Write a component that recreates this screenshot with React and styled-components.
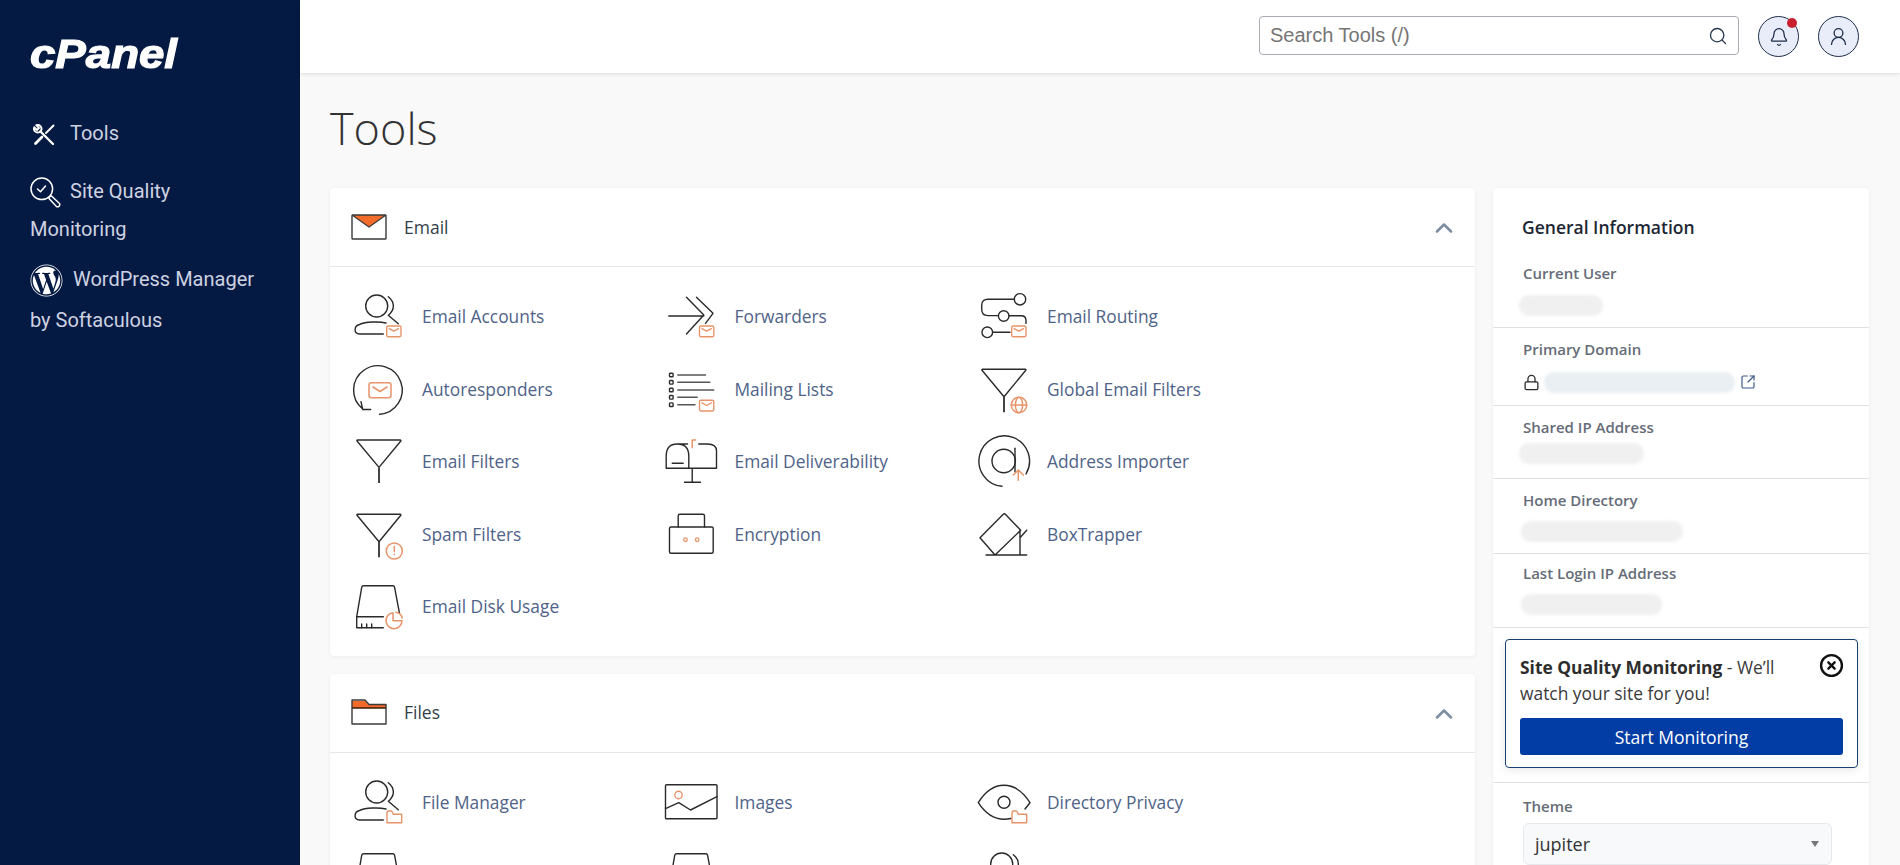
import React from "react";
import styled, { createGlobalStyle } from "styled-components";
import { Bell, ChevronUp, CircleX, Lock, Search, SquareArrowOutUpRight, UserRound } from "lucide-react";
import { FaWordpress } from "react-icons/fa";

const INK = "#2a2a2a";
const ORANGE = "#e8946a";

const GlobalStyle = createGlobalStyle`
  html, body {
    margin: 0;
    height: 100%;
    overflow: hidden;
    background: #f9f9f9;
    font-family: "Open Sans", "Liberation Sans", sans-serif;
  }
  * { box-sizing: border-box; }
`;

const Shell = styled.div`
  display: flex;
  height: 865px;
  overflow: hidden;
`;

const Sidebar = styled.nav`
  flex: 0 0 300px;
  background: #051a42;
  padding: 31px 30px 0;
  font-family: Roboto, "Liberation Sans", sans-serif;
`;

const Logo = styled.div`
  font-family: "Liberation Sans", sans-serif;
  font-size: 40px;
  line-height: 46px;
  font-weight: 700;
  font-style: italic;
  color: #fff;
  -webkit-text-stroke: 1.2px #fff;
  transform: scaleX(1.14);
  transform-origin: left center;
  margin-bottom: 40px;
`;

const NavItem = styled.a`
  display: block;
  color: #cdd2e2;
  font-size: 20px;
  line-height: ${(p) => p.$line}px;
  margin-bottom: ${(p) => p.$after}px;
  svg {
    vertical-align: middle;
    margin-right: ${(p) => p.$iconGap}px;
    margin-left: ${(p) => p.$iconLeft || 0}px;
    color: #fff;
  }
`;

const Main = styled.div`
  flex: 1;
  min-width: 0;
  display: flex;
  flex-direction: column;
`;

const Topbar = styled.header`
  height: 73px;
  flex: none;
  background: #fff;
  box-shadow: 0 1px 4px rgba(0, 0, 0, 0.12);
  display: flex;
  align-items: flex-start;
  padding: 16px 41px 0 0;
  justify-content: flex-end;
  gap: 19px;
`;

const SearchBox = styled.div`
  width: 480px;
  height: 39px;
  border: 1px solid #a9adb3;
  border-radius: 4px;
  display: flex;
  align-items: center;
  justify-content: space-between;
  padding: 0 10px 0 10px;
  font-family: "Liberation Sans", sans-serif;
  font-size: 20px;
  color: #757575;
  svg { color: #26374f; }
`;

const RoundButton = styled.button`
  position: relative;
  width: 41px;
  height: 41px;
  padding: 0;
  border: 1px solid #1d2c4a;
  border-radius: 50%;
  background: #e8edf9;
  display: flex;
  align-items: center;
  justify-content: center;
  color: #1d2c4a;
`;

const Dot = styled.span`
  position: absolute;
  top: 1px;
  right: 1px;
  width: 10px;
  height: 10px;
  border-radius: 50%;
  background: #c8202f;
`;

const Content = styled.main`
  flex: 1;
  padding: 0 31px 0 30px;
`;

const Title = styled.h1`
  margin: 0;
  height: 115px;
  padding-top: 23px;
  font-size: 45px;
  line-height: 64px;
  font-weight: 300;
  color: #333;
`;

const Columns = styled.div`
  display: grid;
  grid-template-columns: 1145px 376px;
  gap: 18px;
  align-items: start;
`;

const Panel = styled.section`
  background: #fff;
  border-radius: 4px;
  box-shadow: 0 1px 4px rgba(0, 0, 0, 0.06);
  margin-bottom: 18px;
`;

const PanelHeader = styled.div`
  height: 79px;
  border-bottom: 1px solid #e4e6e8;
  padding: 0 17px 1px 21px;
  display: flex;
  align-items: center;
  gap: 17px;
  font-size: 17.5px;
  color: #333f48;
  svg:last-child { margin: 3px 0 0 auto; color: #7f8da3; }
`;

const ToolGrid = styled.div`
  display: grid;
  grid-template-columns: repeat(3, 312.5px);
  grid-auto-rows: 72.5px;
  padding: 13px 0 13px 20px;
`;

const Tool = styled.a`
  display: flex;
  align-items: center;
  gap: 16px;
  font-size: 17.35px;
  color: #4f6388;
`;

const ToolIcon = styled.svg.attrs({ viewBox: "0 0 56 56", fill: "none" })`
  flex: none;
  width: 56px;
  height: 56px;
  stroke: ${INK};
  stroke-width: 1.4;
  stroke-linecap: round;
  stroke-linejoin: round;
`;

const InfoPanel = styled(Panel)`
  margin: 0;
  height: 700px;
`;

const InfoTitle = styled.h2`
  margin: 0;
  padding: 27px 0 0 29px;
  font-size: 17.5px;
  line-height: 24px;
  font-weight: 600;
  color: #1d2733;
`;

const InfoRow = styled.div`
  padding: ${(p) => p.$top}px 0 ${(p) => p.$bottom}px 30px;
  border-bottom: 1px solid #dfe1e4;
`;

const InfoLabel = styled.div`
  font-size: 15px;
  line-height: 22px;
  font-weight: 600;
  color: #666c78;
`;

const Blur = styled.div`
  width: ${(p) => p.$w}px;
  height: 21px;
  margin-top: ${(p) => p.$gap}px;
  margin-left: ${(p) => p.$left}px;
  border-radius: 10px;
  background: ${(p) => p.$color || "#f0f0f0"};
  filter: blur(1.5px);
`;

const DomainLine = styled.div`
  display: flex;
  align-items: center;
  margin-top: 12px;
  height: 20px;
  svg:first-child { color: #2a2a2a; margin-right: 4px; }
  svg:last-child { color: #3d5a8c; margin-left: 5px; }
  ${Blur} { margin: 0; }
`;

const PromoWrap = styled.div`
  padding: 11px 11px 14px 12px;
  border-bottom: 1px solid #dfe1e4;
`;

const Promo = styled.div`
  position: relative;
  height: 129px;
  border: 1px solid #17406f;
  border-radius: 4px;
  padding: 15px 14px 0;
  box-shadow: 0 2px 8px rgba(0, 0, 0, 0.1);
  font-size: 17.4px;
  line-height: 25.5px;
  color: #3a3a3a;
  b { font-weight: 700; color: #2d2d2d; }
`;

const PromoText = styled.p`
  margin: 0 0 12px;
  width: 270px;
`;

const CloseButton = styled.span`
  position: absolute;
  top: 13px;
  right: 13px;
  display: flex;
  color: #111;
`;

const StartButton = styled.button`
  display: block;
  width: 100%;
  height: 37px;
  border: 0;
  border-radius: 3px;
  background: #023ca5;
  color: #fff;
  font-family: inherit;
  font-size: 17.5px;
  font-weight: 500;
`;

const ThemeBlock = styled.div`
  padding: 12px 0 0 30px;
`;

const ThemeSelect = styled.div`
  width: 309px;
  height: 42px;
  margin-top: 6px;
  padding: 0 11px;
  border: 1px solid #e6e8ec;
  border-radius: 6px;
  background: #f8f9fb;
  display: flex;
  align-items: center;
  justify-content: space-between;
  font-size: 18px;
  color: #333;
`;

const Caret = styled.span`
  width: 0;
  height: 0;
  margin-right: 1px;
  border-left: 4.5px solid transparent;
  border-right: 4.5px solid transparent;
  border-top: 6px solid #777;
`;

function MiniMail({ x = 36.7, y = 38 }) {
  return (
    <g stroke={ORANGE} transform={`translate(${x} ${y})`}>
      <rect width="14.3" height="10.7" rx="1.4" />
      <path d="M2.5 2.6 7.1 5.2 11.8 2.6" />
    </g>
  );
}

function MiniFolder({ x = 37, y = 37 }) {
  return (
    <path
      stroke={ORANGE}
      transform={`translate(${x} ${y})`}
      d="M0 1.5V11.7H14.7V3.2H6.4L4.6 0H1Z"
    />
  );
}

function Person({ children }) {
  return (
    <ToolIcon>
      <circle cx="26.7" cy="18" r="11" />
      <path d="M38.3 8.7c6.5 5 7 13 0 18.5l10 8.5M33.3 46H9.5c-6-.4-5.8-8 0-9.5 6-2.6 19-3.4 26.5-1.5" />
      {children}
    </ToolIcon>
  );
}

function DiskBody({ children }) {
  return (
    <ToolIcon>
      <path d="M33.3 49.7H6.7V38.7L11.7 9.4q.3-1.7 2-1.7H42.8q1.5 0 1.8 1.7L49.5 35.3M6.7 38.7H33.3" />
      <path d="M11.7 46v3.7M16.7 46v3.7M21.7 46v3.7" />
      {children}
    </ToolIcon>
  );
}

function Funnel({ top = 8.3, children }) {
  const apex = top + 27.4;
  return (
    <ToolIcon>
      <path d={`M7.5 ${top}H50.2q1 0 .6 1L29 ${apex}L7 ${top + 1}q-.4-1 .5-1Z`} />
      <path strokeWidth="2" strokeLinecap="butt" stroke="#444" d={`M29 ${apex}V${top + 43}`} />
      {children}
    </ToolIcon>
  );
}

const icons = {
  accounts: (
    <Person>
      <MiniMail />
    </Person>
  ),
  forwarders: (
    <ToolIcon>
      <path d="M5.8 28H40.8M23.5 9.3 40.8 27 23.5 46M33.5 9.3 50 25.3 42.5 35.3" />
      <MiniMail x={36.5} />
    </ToolIcon>
  ),
  routing: (
    <ToolIcon>
      <circle cx="45" cy="11.3" r="5.7" />
      <circle cx="28.7" cy="28" r="5.3" />
      <circle cx="12.3" cy="44.3" r="5.3" />
      <path d="M39.3 11.3H13q-6.3 0-6.3 6v4q0 6.3 6.3 6.3H23.3M34 27.7H46q5 0 5 4.5v3.2M17.7 44.3H35" />
      <MiniMail />
    </ToolIcon>
  ),
  autoresponders: (
    <ToolIcon>
      <g transform="translate(1 0)">
        <path d="M28.5 53.3A24.3 24.3 0 1 0 11.7 48M10 40.7 11.7 48.5 19.7 48.5" />
        <g stroke={ORANGE} strokeWidth="1.5">
          <rect x="18" y="21.7" width="22" height="15" rx="2.5" />
          <path d="M22 26 29 30.5 36 26" />
        </g>
      </g>
    </ToolIcon>
  ),
  lists: (
    <ToolIcon>
      {[14, 21.3, 29, 36.3, 43.7].map((y) => (
        <rect key={y} x="6.5" y={y - 1.8} width="3.6" height="3.6" rx=".8" />
      ))}
      <path stroke="#555" strokeWidth="1.5" d="M14.8 14H42.5M14.8 21.3H46.8M14.8 29H50.8M14.8 36.3H34.2M14.8 43.7H32" />
      <MiniMail x={36.5} y={39.3} />
    </ToolIcon>
  ),
  globalFilters: (
    <Funnel>
      <g stroke={ORANGE} strokeWidth="1.5">
        <circle cx="44" cy="44" r="7.7" />
        <ellipse cx="44" cy="44" rx="3.6" ry="7.7" />
        <path d="M36.3 44H51.7" />
      </g>
    </Funnel>
  ),
  filters: <Funnel top={7} />,
  deliverability: (
    <ToolIcon>
      <path d="M25.8 35.3H3.2V23Q3.2 11 14.2 11 25.8 11 25.8 23V35.3H53.5V18Q53.5 11 44.5 11H35.8M14.2 11H24.5M9.2 30.3H20.2M29.2 35.3V49.3M21.5 49.3H37.5" />
      <path stroke={ORANGE} strokeWidth="1.5" strokeLinecap="butt" d="M29.2 15.3V7H33.2" />
    </ToolIcon>
  ),
  importer: (
    <ToolIcon>
      <path d="M27 53.3A25.3 25.3 0 1 1 51 41" />
      <circle cx="28.7" cy="28" r="11.7" />
      <path d="M40 15.3V38.7" />
      <path stroke={ORANGE} strokeWidth="1.5" d="M43.3 47.3V37M38.3 42 43.3 37 48.3 42" />
    </ToolIcon>
  ),
  spam: (
    <Funnel>
      <g stroke={ORANGE} strokeWidth="1.5">
        <circle cx="44.3" cy="45" r="8" />
        <path d="M44.3 40.5V45.5M44.3 48.3V48.5" />
      </g>
    </Funnel>
  ),
  encryption: (
    <ToolIcon>
      <rect x="6.5" y="21" width="43.7" height="26.3" rx="1.5" />
      <path d="M15.2 21V10q0-1.7 1.7-1.7H39.8q1.7 0 1.7 1.7V21" />
      <g stroke={ORANGE} strokeWidth="1.3">
        <circle cx="22.5" cy="33.7" r="1.8" />
        <circle cx="34.2" cy="33.7" r="1.8" />
      </g>
    </ToolIcon>
  ),
  boxtrapper: (
    <ToolIcon>
      <path d="M20 49 5 31.7 28 8.4q1.3-1.2 2.6 0L45.7 24.3ZM11 49H51.7M45 24.3V49M45 31.7 51.7 24.3" />
    </ToolIcon>
  ),
  disk: (
    <DiskBody>
      <g stroke={ORANGE} strokeWidth="1.5">
        <path d="M43 34.7A8 8 0 1 0 52 42.7H43Z" />
        <path d="M46 34.3A8 8 0 0 1 52.3 40" />
      </g>
    </DiskBody>
  ),
  plainDisk: <DiskBody />,
  fileManager: (
    <Person>
      <MiniFolder />
    </Person>
  ),
  ftp: <Person />,
  images: (
    <ToolIcon>
      <rect x="2.5" y="10.7" width="51.5" height="34" rx="1" />
      <path d="M2.5 34.7 15.8 28.7 27.5 36 54 22.7" />
      <circle stroke={ORANGE} cx="15.5" cy="21" r="3.7" />
    </ToolIcon>
  ),
  privacy: (
    <ToolIcon>
      <path d="M36 44.5Q32.5 45.3 29 45.3 14 45.3 3.3 28.7 14 11.3 29 11.3 44 11.3 55 28.7L50 35" />
      <circle cx="29" cy="28.3" r="6" />
      <MiniFolder />
    </ToolIcon>
  ),
};

const EmailGlyph = () => (
  <svg width="36" height="26" viewBox="0 0 36 26" fill="none">
    <path d="M1 1H35L18 13Z" fill="#f26b2a" />
    <rect x="1" y="1" width="34" height="24" stroke="#3a3a3a" strokeWidth="1.4" rx=".8" />
    <path d="M1 1 18 13 35 1" stroke="#3a3a3a" strokeWidth="1.2" />
  </svg>
);

const FilesGlyph = () => (
  <svg width="36" height="26" viewBox="0 0 36 26" fill="none">
    <path d="M1 2H14L18 6H35V9H1Z" fill="#f26b2a" />
    <path d="M1 9H35" stroke="#3a1a0a" strokeWidth="1.6" />
    <path d="M1 1H14L18 5.5H35V25H1Z" stroke="#3a3a3a" strokeWidth="1.4" strokeLinejoin="round" />
  </svg>
);

const ToolsGlyph = () => (
  <svg width="24" height="24" viewBox="0 0 24 24" fill="none" stroke="currentColor" strokeLinecap="round" strokeLinejoin="round">
    <path strokeWidth="1.9" d="M2.2 4.2 5 7 7 5 4.2 2.2C7.5 1 10.5 4 9.2 7.4L7.4 9.2C4 10.5 1 7.5 2.2 4.2Z" />
    <path strokeWidth="2.3" d="M8.5 8.5 21 21" />
    <path strokeWidth="1.9" d="M21.5 2.5 14 10" />
    <path strokeWidth="2.8" d="M10 14 3.5 20.5" />
  </svg>
);

const QualityGlyph = () => (
  <svg width="31" height="31" viewBox="0 0 31 31" fill="none" stroke="currentColor" strokeWidth="1.5" strokeLinecap="round" strokeLinejoin="round">
    <circle cx="11.8" cy="11.8" r="10.8" />
    <path d="M7.5 12 10.5 14.8 15.5 9" />
    <path d="M19.5 19.5 21.5 19 29.5 26.5q.8 1.5-.5 2.8-1.3 1-2.8 0L19 21.5Z" />
  </svg>
);

const infoRows = [
  { label: "Current User", top: 23, bottom: 11, gap: 11, w: 84, left: -4 },
  { label: "Primary Domain", top: 10, bottom: 13, domain: true },
  { label: "Shared IP Address", top: 10, bottom: 14, gap: 5, w: 125, left: -4 },
  { label: "Home Directory", top: 10, bottom: 11, gap: 10, w: 162, left: -2 },
  { label: "Last Login IP Address", top: 8, bottom: 12, gap: 10, w: 141, left: -2 },
];

const toolSections = [
  {
    name: "Email",
    glyph: <EmailGlyph />,
    tools: [
      ["Email Accounts", "accounts"],
      ["Forwarders", "forwarders"],
      ["Email Routing", "routing"],
      ["Autoresponders", "autoresponders"],
      ["Mailing Lists", "lists"],
      ["Global Email Filters", "globalFilters"],
      ["Email Filters", "filters"],
      ["Email Deliverability", "deliverability"],
      ["Address Importer", "importer"],
      ["Spam Filters", "spam"],
      ["Encryption", "encryption"],
      ["BoxTrapper", "boxtrapper"],
      ["Email Disk Usage", "disk"],
    ],
  },
  {
    name: "Files",
    glyph: <FilesGlyph />,
    tools: [
      ["File Manager", "fileManager"],
      ["Images", "images"],
      ["Directory Privacy", "privacy"],
      [null, "plainDisk"],
      [null, "plainDisk"],
      [null, "ftp"],
    ],
  },
];

export default function App() {
  return (
    <Shell>
      <GlobalStyle />
      <Sidebar>
        <Logo>cPanel</Logo>
        <NavItem $line={32} $after={23} $iconGap={14} $iconLeft={2}>
          <ToolsGlyph />
          Tools
        </NavItem>
        <NavItem $line={38} $after={11} $iconGap={9}>
          <QualityGlyph />
          Site Quality Monitoring
        </NavItem>
        <NavItem $line={41} $after={0} $iconGap={10}>
          <FaWordpress size={33} />
          WordPress Manager by Softaculous
        </NavItem>
      </Sidebar>
      <Main>
        <Topbar>
          <SearchBox>
            Search Tools (/)
            <Search size={20} strokeWidth={1.6} />
          </SearchBox>
          <RoundButton>
            <Bell size={20} strokeWidth={1.5} />
            <Dot />
          </RoundButton>
          <RoundButton>
            <UserRound size={21} strokeWidth={1.5} />
          </RoundButton>
        </Topbar>
        <Content>
          <Title>Tools</Title>
          <Columns>
            <div>
              {toolSections.map((section) => (
                <Panel key={section.name}>
                  <PanelHeader>
                    {section.glyph}
                    {section.name}
                    <ChevronUp size={28} strokeWidth={2.2} />
                  </PanelHeader>
                  <ToolGrid>
                    {section.tools.map(([label, icon], i) => (
                      <Tool key={i}>
                        {icons[icon]}
                        {label}
                      </Tool>
                    ))}
                  </ToolGrid>
                </Panel>
              ))}
            </div>
            <InfoPanel>
              <InfoTitle>General Information</InfoTitle>
              {infoRows.map((row) => (
                <InfoRow key={row.label} $top={row.top} $bottom={row.bottom}>
                  <InfoLabel>{row.label}</InfoLabel>
                  {row.domain ? (
                    <DomainLine>
                      <Lock size={17} strokeWidth={1.8} />
                      <Blur $w={191} $color="#eaeff3" />
                      <SquareArrowOutUpRight size={16} strokeWidth={1.8} />
                    </DomainLine>
                  ) : (
                    <Blur $w={row.w} $gap={row.gap} $left={row.left} />
                  )}
                </InfoRow>
              ))}
              <PromoWrap>
                <Promo>
                  <PromoText>
                    <b>Site Quality Monitoring</b> - We’ll watch your site for you!
                  </PromoText>
                  <CloseButton>
                    <CircleX size={25} strokeWidth={2.3} />
                  </CloseButton>
                  <StartButton>Start Monitoring</StartButton>
                </Promo>
              </PromoWrap>
              <ThemeBlock>
                <InfoLabel>Theme</InfoLabel>
                <ThemeSelect>
                  jupiter
                  <Caret />
                </ThemeSelect>
              </ThemeBlock>
            </InfoPanel>
          </Columns>
        </Content>
      </Main>
    </Shell>
  );
}
